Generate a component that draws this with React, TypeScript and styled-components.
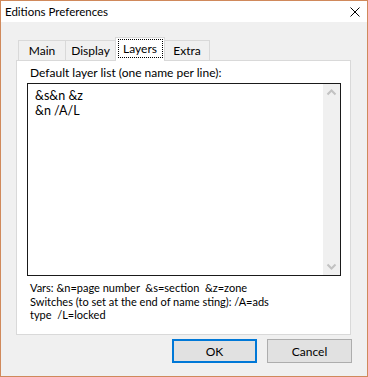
import React from "react";
import styled, { createGlobalStyle } from "styled-components";

const GlobalStyle = createGlobalStyle`
  html, body {
    margin: 0;
    padding: 0;
    background: #ffffff;
  }
  body {
    font-family: "Lato", "Liberation Sans", sans-serif;
    font-size: 12px;
    color: #000000;
  }
`;

const TABS = ["Main", "Display", "Layers", "Extra"];
const TAB_WIDTHS: Record<string, number> = { Main: 48, Display: 51, Layers: 50, Extra: 46 };

function App() {
  const active = "Layers";

  return (
    <>
      <GlobalStyle />
      <Window>
        <TitleBar>
          <span>Editions Preferences</span>
          <svg width="10" height="10" viewBox="0 0 10 10">
            <path d="M0.5 0.5 L9.5 9.5 M9.5 0.5 L0.5 9.5" stroke="#000" strokeWidth="1" />
          </svg>
        </TitleBar>
        <Body>
          <TabRow>
            {TABS.map((t) => (
              <Tab key={t} $active={t === active} $width={TAB_WIDTHS[t]}>
                {t === active ? <Focus>{t}</Focus> : t}
              </Tab>
            ))}
          </TabRow>
          <Panel>
            <Label>Default layer list (one name per line):</Label>
            <Edit>
              <EditText>
                &amp;s&amp;n &amp;z
                <br />
                &amp;n /A/L
              </EditText>
              <ScrollBar>
                <svg width="17" height="17" viewBox="0 0 17 17">
                  <path d="M4.5 10.5 L8.5 6.5 L12.5 10.5" fill="none" stroke="#c2c2c2" strokeWidth="2" />
                </svg>
                <svg width="17" height="17" viewBox="0 0 17 17">
                  <path d="M4.5 6.5 L8.5 10.5 L12.5 6.5" fill="none" stroke="#c2c2c2" strokeWidth="2" />
                </svg>
              </ScrollBar>
            </Edit>
            <Help>
              {"Vars: &n=page number  &s=section  &z=zone\nSwitches (to set at the end of name sting): /A=ads\ntype  /L=locked"}
            </Help>
          </Panel>
          <Footer>
            <Button $default>OK</Button>
            <Button>Cancel</Button>
          </Footer>
        </Body>
      </Window>
    </>
  );
}

const Window = styled.div`
  box-sizing: border-box;
  width: 368px;
  height: 377px;
  border: 1px solid #d0895b;
  background: #f0f0f0;
  display: flex;
  flex-direction: column;
`;

const TitleBar = styled.div`
  height: 21px;
  background: #ffffff;
  display: flex;
  align-items: center;
  justify-content: space-between;
  padding: 0 7px 0 4px;
  font-size: 11.5px;
  color: #000;
`;

const Body = styled.div`
  flex: 1;
  padding: 15px 15px 0 15px;
  display: flex;
  flex-direction: column;
`;

const TabRow = styled.div`
  display: flex;
  align-items: flex-end;
  height: 23px;
  padding-left: 2px;
  position: relative;
  z-index: 1;
`;

const Tab = styled.div<{ $active?: boolean; $width: number }>`
  box-sizing: border-box;
  width: ${({ $width }) => $width}px;
  height: ${({ $active }) => ($active ? 24 : 20)}px;
  margin-left: -1px;
  margin-bottom: ${({ $active }) => ($active ? -1 : 0)}px;
  border: 1px solid #d9d9d9;
  border-bottom: none;
  background: ${({ $active }) => ($active ? "#ffffff" : "#f0f0f0")};
  display: flex;
  align-items: ${({ $active }) => ($active ? "flex-start" : "center")};
  justify-content: center;
  padding-top: ${({ $active }) => ($active ? 1 : 0)}px;
  position: relative;
  z-index: ${({ $active }) => ($active ? 2 : 1)};
  &:first-child {
    margin-left: 0;
  }
`;

const Focus = styled.span`
  box-sizing: border-box;
  width: 45px;
  height: 19px;
  display: flex;
  align-items: center;
  justify-content: center;
  border: 1px dotted #000;
`;

const Panel = styled.div`
  box-sizing: border-box;
  width: 335px;
  height: 275px;
  background: #ffffff;
  border: 1px solid #d9d9d9;
  padding: 5px 10px 0 10px;
  display: flex;
  flex-direction: column;
`;

const Label = styled.div`
  line-height: 13px;
  padding-left: 3px;
`;

const Edit = styled.div`
  box-sizing: border-box;
  margin-top: 4px;
  width: 314px;
  height: 193px;
  border: 1px solid #1a1a1a;
  display: flex;
`;

const EditText = styled.div`
  flex: 1;
  padding: 4px 7px;
  line-height: 15px;
  font-size: 12.5px;
`;

const ScrollBar = styled.div`
  width: 17px;
  background: #f0f0f0;
  display: flex;
  flex-direction: column;
  justify-content: space-between;
`;

const Help = styled.div`
  margin-top: 5px;
  padding-left: 3px;
  line-height: 13.5px;
  font-size: 11px;
  white-space: pre;
`;

const Footer = styled.div`
  display: flex;
  justify-content: flex-end;
  gap: 10px;
  margin-top: 4px;
`;

const Button = styled.button<{ $default?: boolean }>`
  box-sizing: border-box;
  width: 85px;
  height: 24px;
  background: #e1e1e1;
  border: ${({ $default }) => ($default ? "2px solid #0078d7" : "1px solid #adadad")};
  font-family: inherit;
  font-size: 12px;
  color: #000;
  padding: 0;
`;

export default App;
